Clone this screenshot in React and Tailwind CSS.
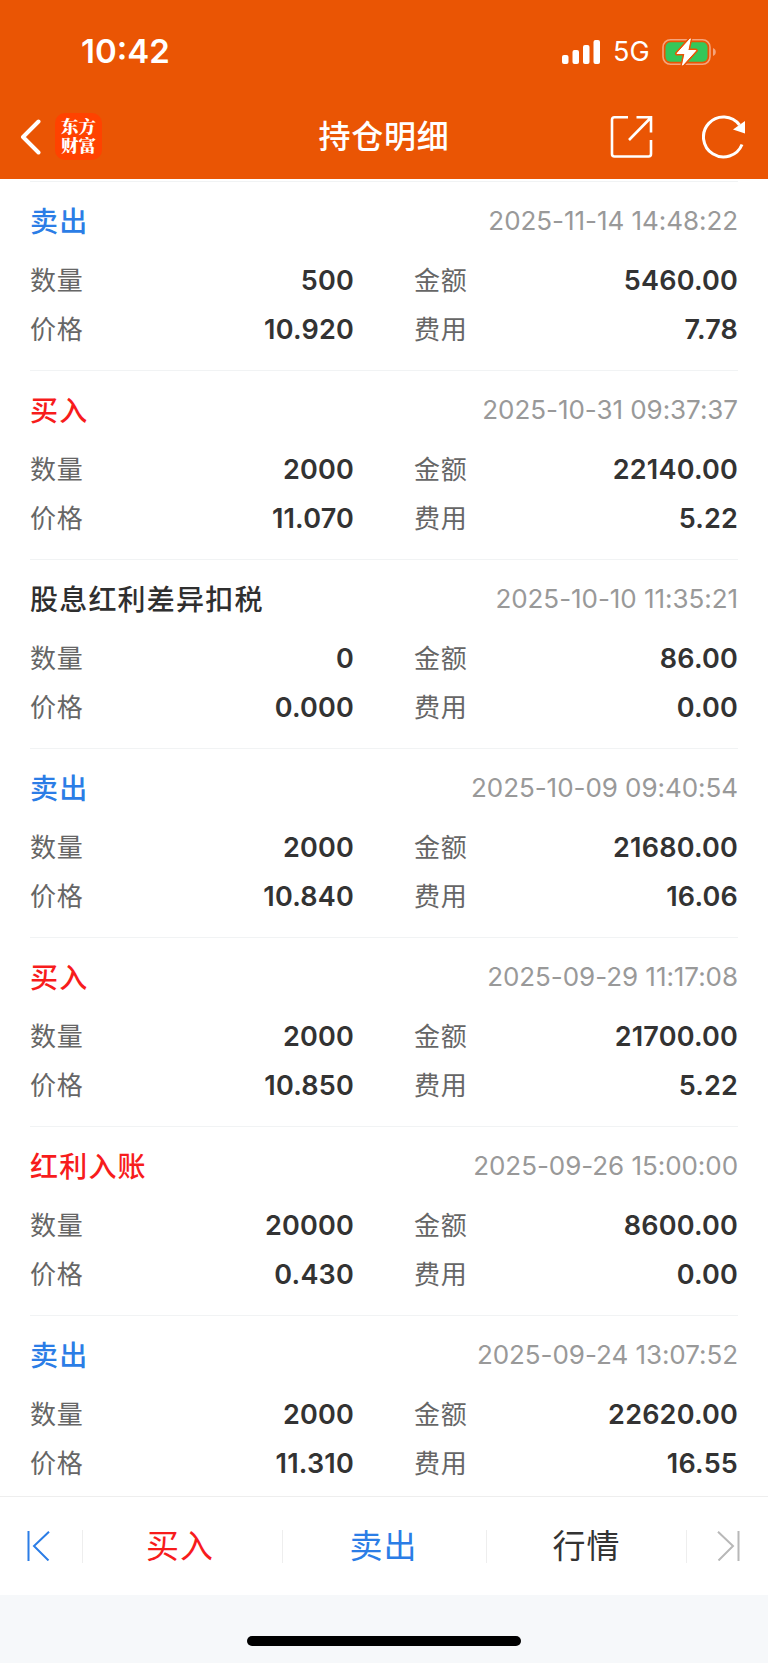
import React from "react";
import clsx from "clsx";

const records = [
  { type: "卖出", tone: "sell", time: "2025-11-14 14:48:22", qty: "500", amount: "5460.00", price: "10.920", fee: "7.78" },
  { type: "买入", tone: "buy", time: "2025-10-31 09:37:37", qty: "2000", amount: "22140.00", price: "11.070", fee: "5.22" },
  { type: "股息红利差异扣税", tone: "plain", time: "2025-10-10 11:35:21", qty: "0", amount: "86.00", price: "0.000", fee: "0.00" },
  { type: "卖出", tone: "sell", time: "2025-10-09 09:40:54", qty: "2000", amount: "21680.00", price: "10.840", fee: "16.06" },
  { type: "买入", tone: "buy", time: "2025-09-29 11:17:08", qty: "2000", amount: "21700.00", price: "10.850", fee: "5.22" },
  { type: "红利入账", tone: "buy", time: "2025-09-26 15:00:00", qty: "20000", amount: "8600.00", price: "0.430", fee: "0.00" },
  { type: "卖出", tone: "sell", time: "2025-09-24 13:07:52", qty: "2000", amount: "22620.00", price: "11.310", fee: "16.55" },
];

const tones = {
  sell: "text-[#2b7de6]",
  buy: "text-[#f71c1c]",
  plain: "text-[#2f2f2f]",
};

function StatusBar() {
  return (
    <div className="flex h-[90px] items-center justify-between pt-[13px] pr-[52px] pl-[81px]">
      <span className="text-[33px] leading-none font-semibold">10:42</span>
      <div className="flex items-center">
        <svg width="40" height="26" viewBox="0 0 40 26" fill="white">
          <rect x="1" y="16" width="6.5" height="9" rx="2" />
          <rect x="11.5" y="11" width="6.5" height="14" rx="2" />
          <rect x="22" y="6" width="6.5" height="19" rx="2" />
          <rect x="32.5" y="1" width="6.5" height="24" rx="2" />
        </svg>
        <span className="ml-3 w-[37px] text-[27px] leading-none">5G</span>
        <svg className="ml-3" width="54" height="28" viewBox="0 0 54 28">
          <rect x="1" y="1.7" width="47" height="24.6" rx="7.5" fill="none" stroke="#f5a47c" strokeWidth="1.6" />
          <path d="M51 10v8c1.8-.7 2.8-2.2 2.8-4S52.8 10.7 51 10z" fill="#f5a47c" />
          <rect x="3.5" y="4.3" width="42" height="19.4" rx="5" fill="#34c759" />
          <path
            d="M28.3 .8L15 15.5h8L20.5 27.2 33.8 12.5h-8z"
            fill="white"
            stroke="#ea5504"
            strokeWidth="4"
            strokeLinejoin="round"
            paintOrder="stroke"
          />
          <path d="M28.3 .8L15 15.5h8L20.5 27.2 33.8 12.5h-8z" fill="white" stroke="white" strokeLinejoin="round" />
        </svg>
      </div>
    </div>
  );
}

function NavBar() {
  return (
    <div className="grid h-[89px] grid-cols-[1fr_auto_1fr] items-center pt-[4px] pr-[21px] pl-[20px]">
      <div className="flex items-center">
        <svg width="22" height="36" viewBox="0 0 22 36" fill="none" stroke="white" strokeWidth="4" strokeLinecap="round" strokeLinejoin="round">
          <path d="M18.5 2.5L3 18l15.500 15.500" />
        </svg>
        <div className="ml-[13px] flex h-[47px] w-[47px] items-center justify-center rounded-[10px] bg-[#ff4200] pb-[3px] text-center font-['Noto_Serif_CJK_SC','Noto_Sans_CJK_SC',serif] text-[17.5px] leading-[19.5px] font-black">
          东方
          <br />
          财富
        </div>
      </div>
      <h1 className="pl-[1px] text-[32px] leading-none font-medium tracking-[0.8px]">持仓明细</h1>
      <div className="flex items-center justify-end gap-[48px]">
        <svg width="44" height="44" viewBox="0 0 44 44" fill="none" stroke="white" strokeWidth="2.6">
          <path d="M18 2.300H4.500A2.500 2.500 0 0 0 2 4.800V39a2.500 2.500 0 0 0 2.500 2.500h34A2.500 2.500 0 0 0 41 39V25" />
          <path d="M26.500 2.300H41V17.500M40.500 3L19 25" />
        </svg>
        <svg width="45" height="44" viewBox="0 0 45 44" fill="none">
          <path d="M40 29.500A20 20 0 1 1 37.500 10" stroke="white" strokeWidth="3" />
          <path d="M43 6V18.500L31 14.500z" fill="white" />
        </svg>
      </div>
    </div>
  );
}

function Field({ label, value }) {
  return (
    <div className="flex h-[49px] items-center justify-between">
      <span className="text-[26px] tracking-[0.8px] text-[#666]">{label}</span>
      <span className="pt-[2px] text-[27px] font-semibold tracking-[0.2px] text-[#333]">{value}</span>
    </div>
  );
}

function Record({ record }) {
  return (
    <li className="h-[189px] shrink-0 border-t border-[#f1f3f4] pt-1">
      <div className="flex h-[70px] items-center justify-between">
        <span className={clsx("pt-[2px] text-[28px] font-medium tracking-[1.2px]", tones[record.tone])}>{record.type}</span>
        <span className="pb-[1px] text-[26px] tracking-[-0.05px] text-[#999]">{record.time}</span>
      </div>
      <div className="grid grid-cols-[324px_324px] justify-between">
        <Field label="数量" value={record.qty} />
        <Field label="金额" value={record.amount} />
        <Field label="价格" value={record.price} />
        <Field label="费用" value={record.fee} />
      </div>
    </li>
  );
}

function Divider() {
  return <span className="h-[33px] w-px bg-[#eee]" />;
}

function BottomBar() {
  return (
    <nav className="flex h-[99px] shrink-0 items-center border-t border-[#eee] bg-white text-[33px] tracking-[1px]">
      <button className="flex w-[82px] pl-[27px]">
        <svg width="23" height="30" viewBox="0 0 23 30" fill="none" stroke="#2b7de6" strokeWidth="2">
          <path d="M1.5 0v30M22 .7L7 15l14.5 14.5" />
        </svg>
      </button>
      <Divider />
      <button className="w-[199px] pt-[2px] pr-[5px] text-[#f71c1c]">买入</button>
      <Divider />
      <button className="w-[203px] pt-[2px] pr-[2px] text-[#2b7de6]">卖出</button>
      <Divider />
      <button className="w-[199px] pt-[2px] text-[#333]">行情</button>
      <Divider />
      <button className="flex flex-1 justify-end pr-[28px]">
        <svg width="23" height="30" viewBox="0 0 23 30" fill="none" stroke="#b8b8b8" strokeWidth="2">
          <path d="M21.5 0v30M1 .7L16 15 1.5 29.5" />
        </svg>
      </button>
    </nav>
  );
}

export default function App() {
  return (
    <div className="flex h-[1663px] w-[768px] flex-col overflow-hidden bg-white font-['Inter','Noto_Sans_CJK_SC',sans-serif]">
      <header className="h-[179px] shrink-0 bg-[#ea5504] text-white">
        <StatusBar />
        <NavBar />
      </header>
      <ul className="mt-[2px] flex min-h-0 flex-1 flex-col overflow-hidden px-[30px]">
        {records.map((record) => (
          <Record key={record.time} record={record} />
        ))}
      </ul>
      <BottomBar />
      <div className="flex h-[68px] shrink-0 justify-center bg-[#f6f8fa] pt-[41px]">
        <div className="h-[10px] w-[274px] rounded-full bg-black" />
      </div>
    </div>
  );
}
